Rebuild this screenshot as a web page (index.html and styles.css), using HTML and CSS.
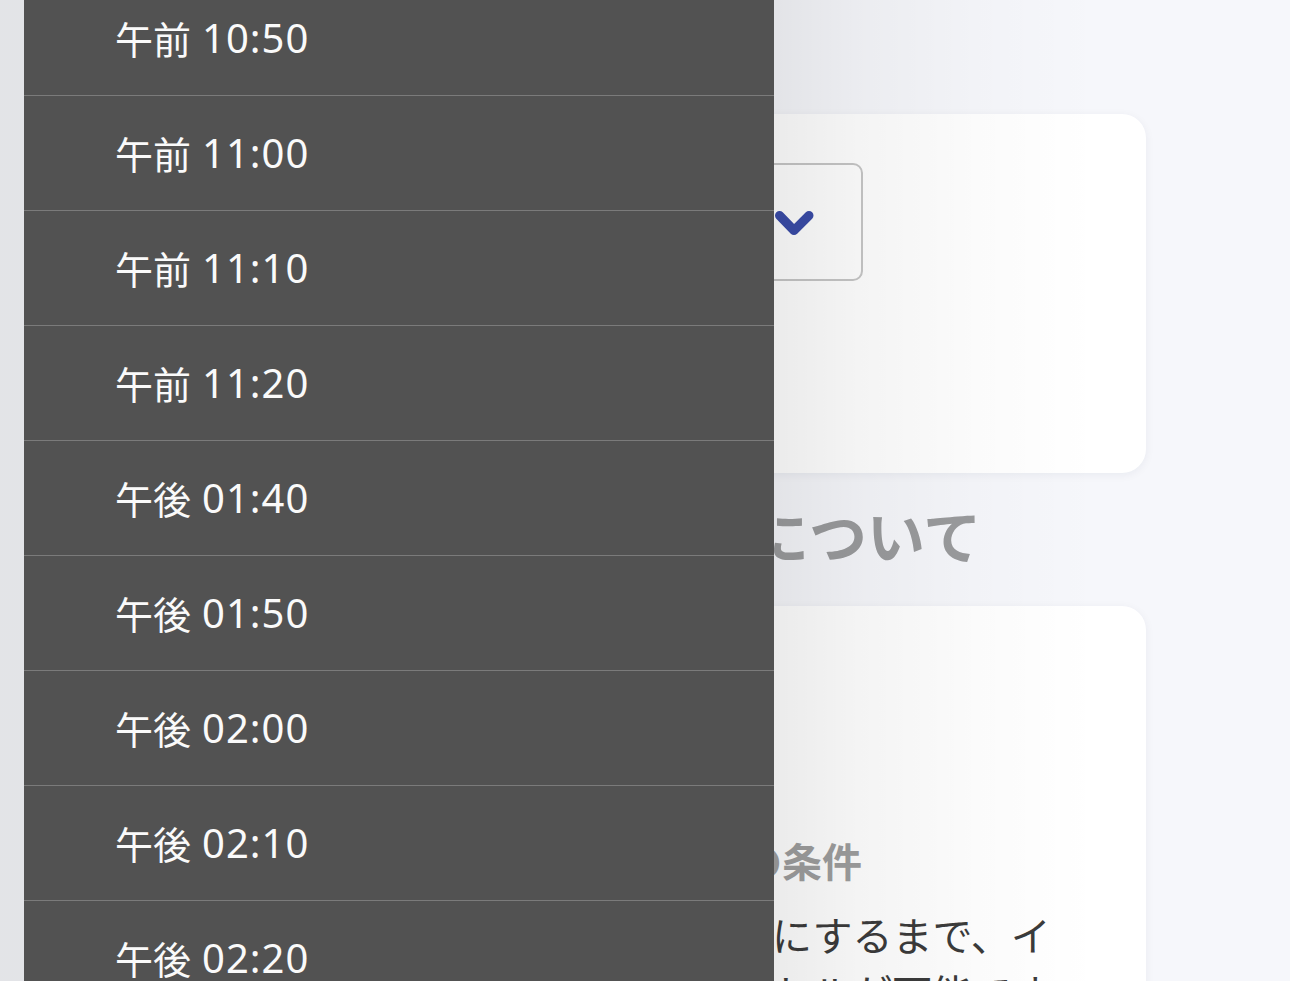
FILE: index.html
```html
<!DOCTYPE html>
<html lang="ja">
<head>
<meta charset="utf-8">
<title>イベント予約</title>
<link rel="stylesheet" href="styles.css">
</head>
<body>
<main class="page">
  <section class="card card-time">
    <div class="select">
      <span class="select-value">午前 11:00</span>
      <svg class="chevron" width="40" height="30" viewBox="0 0 40 30" aria-hidden="true">
        <polyline points="5.5,7.5 20,22.5 35,7.5" fill="none" stroke="#3a4ca8" stroke-width="9" stroke-linecap="round" stroke-linejoin="round"/>
      </svg>
    </div>
    <p class="note">※時刻は10分単位で選択できます</p>
  </section>

  <h2 class="section-title">イベントのキャンセルについて</h2>

  <section class="card card-cancel">
    <div class="intro">
      <p>参加費：無料</p>
      <p>定員：30名</p>
    </div>
    <h3 class="sub-title">参加申込みのキャンセルの条件</h3>
    <p class="body-text">主催者がステータスを「確定」にするまで、イベントへの参加申込みのキャンセルが可能です。</p>
  </section>
</main>

<div class="scrim"></div>

<ul class="menu">
  <li class="menu-item"><span class="ampm">午前</span><span class="time">10:50</span></li>
  <li class="menu-item"><span class="ampm">午前</span><span class="time">11:00</span></li>
  <li class="menu-item"><span class="ampm">午前</span><span class="time">11:10</span></li>
  <li class="menu-item"><span class="ampm">午前</span><span class="time">11:20</span></li>
  <li class="menu-item"><span class="ampm">午後</span><span class="time">01:40</span></li>
  <li class="menu-item"><span class="ampm">午後</span><span class="time">01:50</span></li>
  <li class="menu-item"><span class="ampm">午後</span><span class="time">02:00</span></li>
  <li class="menu-item"><span class="ampm">午後</span><span class="time">02:10</span></li>
  <li class="menu-item"><span class="ampm">午後</span><span class="time">02:20</span></li>
</ul>
</body>
</html>
```

FILE: styles.css
```css
html, body {
  margin: 0;
  height: 100%;
  overflow: hidden;
}

body {
  position: relative;
  background: #f6f7fb;
  font-family: "Noto Sans CJK JP", "Noto Sans", sans-serif;
  color: #3b3b3b;
}

.page {
  padding: 114px 144px 0 156px;
}

.card {
  background: #ffffff;
  border-radius: 24px;
  box-shadow: 0 2px 10px rgba(20, 30, 60, 0.06);
  box-sizing: border-box;
}

.card-time {
  height: 359px;
  padding: 49px 56px 0;
}

.select {
  width: 651px;
  height: 118px;
  box-sizing: border-box;
  border: 2px solid #c6c6c6;
  border-radius: 10px;
  display: flex;
  align-items: center;
  justify-content: space-between;
  padding: 0 47px 0 28px;
  font-size: 40px;
  color: #333333;
}

.chevron {
  display: block;
  margin-top: 2px;
}

.note {
  margin: 40px 0 0;
  font-size: 30px;
  line-height: 44px;
  color: #777777;
}

.section-title {
  margin: 22px 0 33px;
  padding-left: 15px;
  font-size: 58px;
  line-height: 78px;
  font-weight: 700;
  color: #9a9b9d;
}

.card-cancel {
  padding: 45px 56px 80px;
}

.intro {
  margin-bottom: 65px;
}

.intro p {
  margin: 0;
  font-size: 40px;
  line-height: 58px;
  color: #3b3b3b;
}

.sub-title {
  margin: 0;
  padding-left: 90px;
  font-size: 40px;
  line-height: 56px;
  font-weight: 700;
  color: #9e9e9e;
}

.body-text {
  margin: 17px 0 0;
  font-size: 40px;
  line-height: 58px;
  color: #3b3b3b;
}

.scrim {
  position: absolute;
  inset: 0;
  background: linear-gradient(to right,
    rgba(0, 0, 0, 0.08) 0px,
    rgba(0, 0, 0, 0.08) 774px,
    rgba(0, 0, 0, 0.045) 860px,
    rgba(0, 0, 0, 0.015) 980px,
    rgba(0, 0, 0, 0) 1100px);
}

.menu {
  position: absolute;
  left: 24px;
  top: -19px;
  width: 750px;
  margin: 0;
  padding: 0;
  list-style: none;
  background: #525252;
}

.menu-item {
  height: 115px;
  box-sizing: border-box;
  border-bottom: 1px solid #7b7b7b;
  display: flex;
  align-items: center;
  gap: 11px;
  padding: 0 0 2px 91px;
  color: #fafafa;
}

.ampm {
  font-family: "Noto Sans CJK JP", sans-serif;
  font-size: 38px;
}

.time {
  font-family: "Noto Sans", "Noto Sans CJK JP", sans-serif;
  font-size: 40px;
  letter-spacing: 1px;
}
```
